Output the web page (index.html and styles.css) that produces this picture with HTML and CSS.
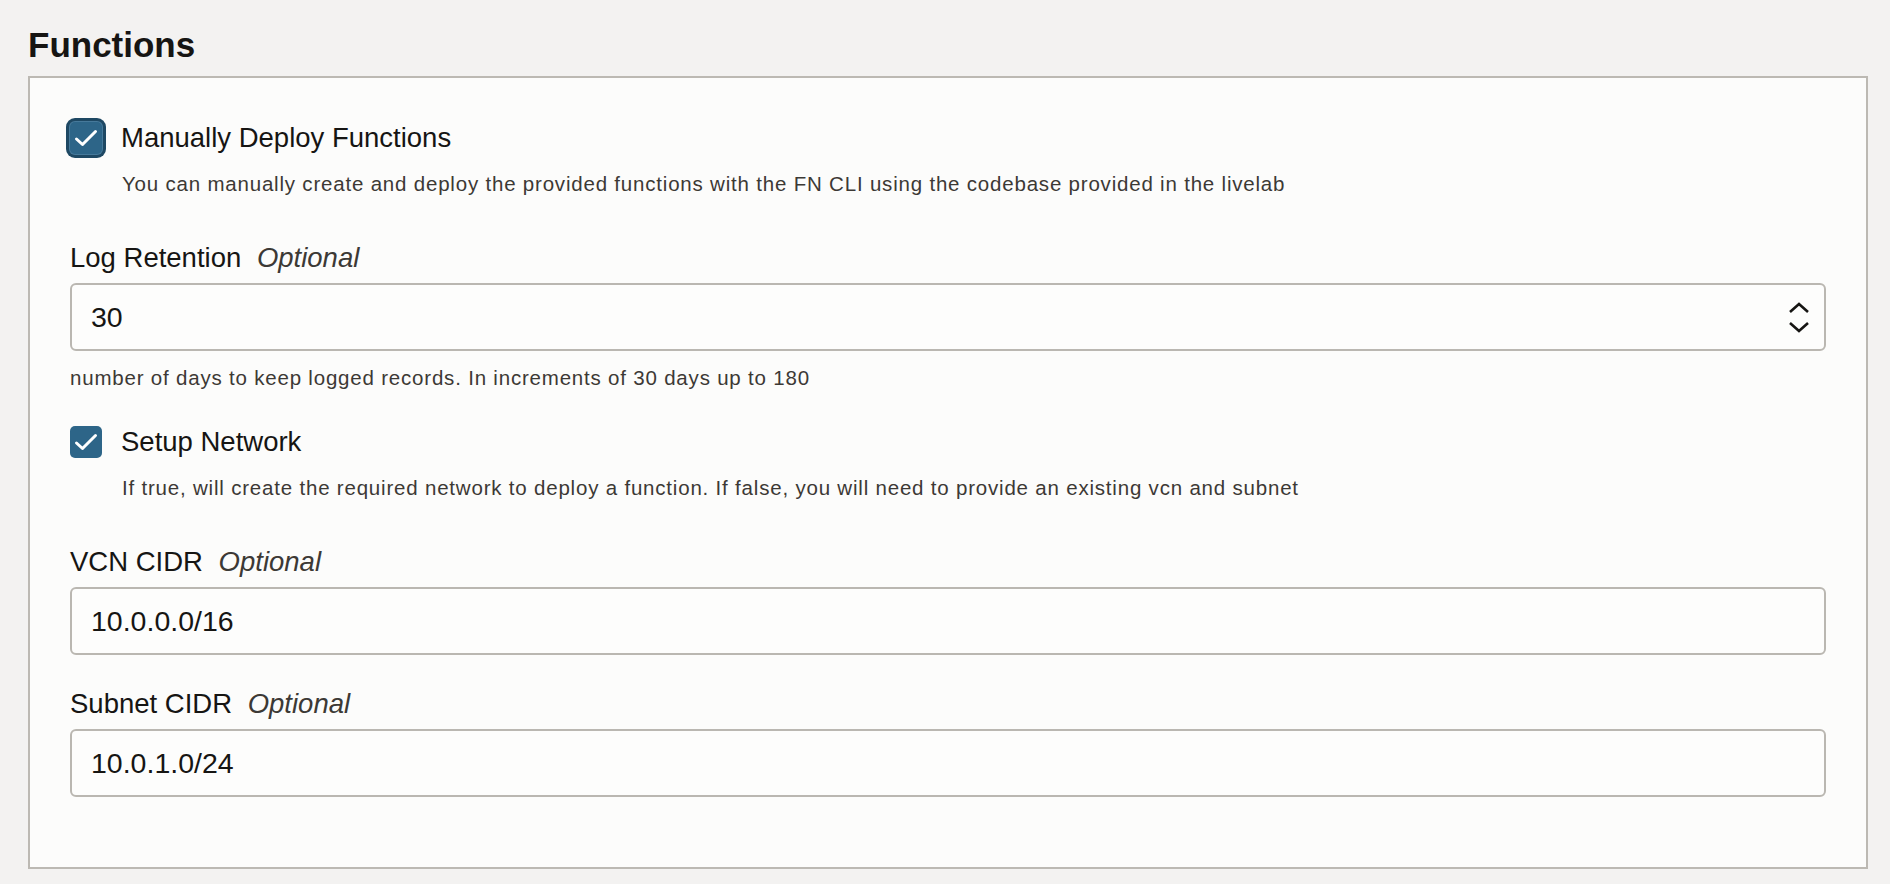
FILE: index.html
```html
<!DOCTYPE html>
<html lang="en">
<head>
<meta charset="utf-8">
<title>Functions</title>
<link rel="stylesheet" href="styles.css">
</head>
<body>
<h2 class="title">Functions</h2>
<section class="panel">
  <div class="check-row">
    <span class="checkbox focused">
      <svg viewBox="0 0 32 32" width="32" height="32"><path d="M6.5 17 L12.5 22.5 L25.5 9.5" fill="none" stroke="#fff" stroke-width="3" stroke-linecap="round" stroke-linejoin="round"/></svg>
    </span>
    <span class="check-label">Manually Deploy Functions</span>
  </div>
  <p class="check-desc">You can manually create and deploy the provided functions with the FN CLI using the codebase provided in the livelab</p>

  <div class="field-label first">Log Retention <em>Optional</em></div>
  <div class="input">
    <span class="value">30</span>
    <svg class="spinner" viewBox="0 0 22 32" width="22" height="32"><path d="M2 11 L11 3 L20 11 M2 22 L11 30 L20 22" fill="none" stroke="#161513" stroke-width="2.6"/></svg>
  </div>
  <p class="helper">number of days to keep logged records. In increments of 30 days up to 180</p>

  <div class="check-row second">
    <span class="checkbox">
      <svg viewBox="0 0 32 32" width="32" height="32"><path d="M6.5 17 L12.5 22.5 L25.5 9.5" fill="none" stroke="#fff" stroke-width="3" stroke-linecap="round" stroke-linejoin="round"/></svg>
    </span>
    <span class="check-label">Setup Network</span>
  </div>
  <p class="check-desc">If true, will create the required network to deploy a function. If false, you will need to provide an existing vcn and subnet</p>

  <div class="field-label first">VCN CIDR <em>Optional</em></div>
  <div class="input"><span class="value">10.0.0.0/16</span></div>

  <div class="field-label after-input">Subnet CIDR <em>Optional</em></div>
  <div class="input"><span class="value">10.0.1.0/24</span></div>
</section>
</body>
</html>
```

FILE: styles.css
```css
html, body {
  margin: 0;
  padding: 0;
}
body {
  background: #f3f2f1;
  font-family: "Liberation Sans", Arial, Helvetica, sans-serif;
  color: #161513;
  padding: 24px 22px 0 28px;
  min-height: 884px;
  box-sizing: border-box;
}
.title {
  margin: 0 0 10px 0;
  font-size: 35px;
  line-height: 42px;
  font-weight: bold;
  color: #161513;
}
.panel {
  background: #fcfcfb;
  border: 2px solid #bcb9b3;
  padding: 44px 40px 70px 40px;
}
.check-row {
  display: flex;
  align-items: center;
  height: 32px;
}
.check-row.second {
  margin-top: 36px;
}
.checkbox {
  width: 32px;
  height: 32px;
  border-radius: 5px;
  background: #2d6588;
  display: flex;
  flex: none;
}
.checkbox.focused {
  box-shadow: 0 0 0 1px #46799a, 0 0 0 4px #1e4863;
}
.check-label {
  margin-left: 19px;
  font-size: 27.5px;
  line-height: 32px;
}
.check-desc {
  margin: 18px 0 0 52px;
  font-size: 20.5px;
  line-height: 24px;
  letter-spacing: 0.8px;
  color: #3c3935;
}
.field-label {
  font-size: 27.5px;
  line-height: 32px;
  margin-bottom: 9px;
}
.field-label.first {
  margin-top: 46px;
}
.field-label.after-input {
  margin-top: 33px;
}
.field-label em {
  margin-left: 8px;
  color: #3c3935;
}
.input {
  height: 68px;
  box-sizing: border-box;
  border: 2px solid #bab7b1;
  border-radius: 6px;
  background: #fdfdfc;
  display: flex;
  align-items: center;
  justify-content: space-between;
  padding: 0 14px 0 19px;
}
.value {
  font-size: 28.5px;
  line-height: 34px;
  color: #161513;
}
.spinner {
  display: block;
}
.helper {
  margin: 15px 0 0 0;
  font-size: 20.5px;
  line-height: 24px;
  letter-spacing: 0.8px;
  color: #3c3935;
}
```
